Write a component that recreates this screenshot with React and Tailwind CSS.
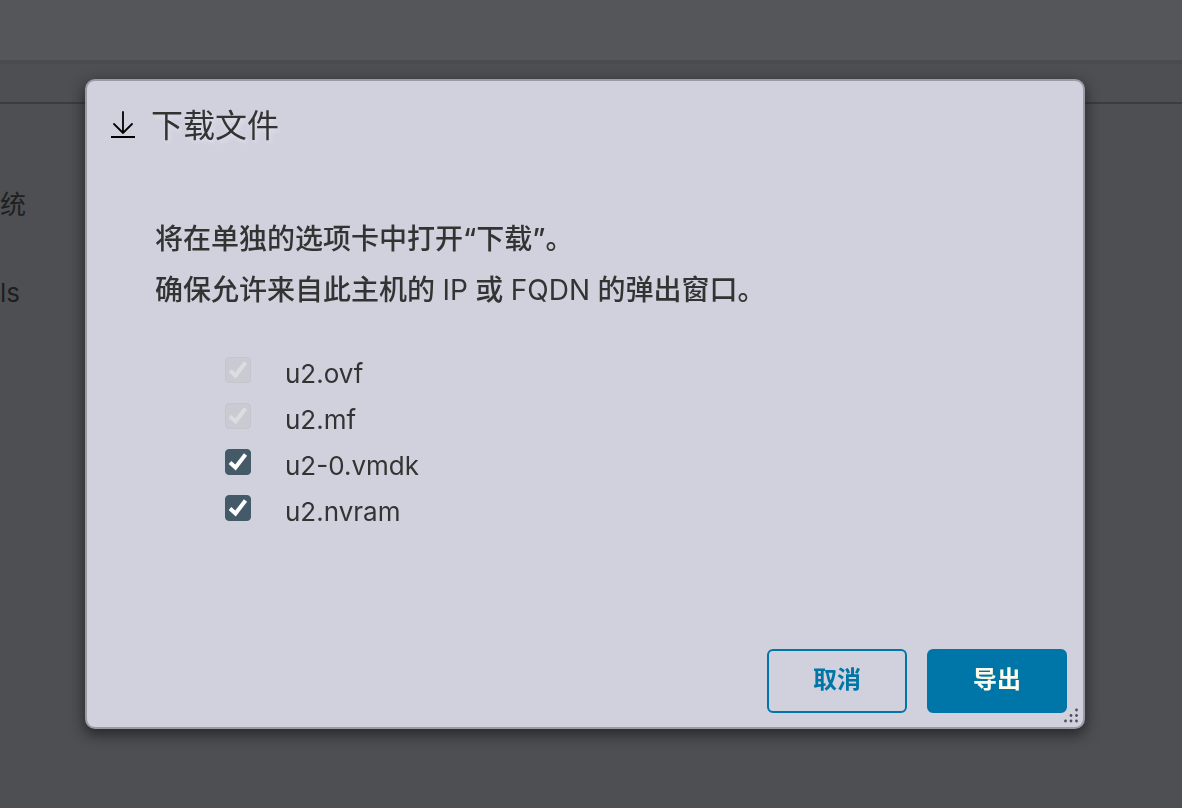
import React, { useState } from "react";

const FILES = [
  { name: "u2.ovf", required: true },
  { name: "u2.mf", required: true },
  { name: "u2-0.vmdk", required: false },
  { name: "u2.nvram", required: false },
];

function DownloadIcon() {
  return (
    <svg className="w-6 h-7" viewBox="0 0 24 28" fill="none" stroke="#000" strokeWidth="2" aria-hidden="true">
      <path d="M12 1v21M3 13l9 9 9-9" strokeWidth="1.800" strokeLinecap="round" />
      <path d="M0 26h24" />
    </svg>
  );
}

function ResizeGrip() {
  return (
    <svg className="absolute right-1 bottom-1 w-4 h-4" viewBox="0 0 16 16" fill="#4f4f5c" aria-hidden="true">
      <circle cx="13.500" cy="3" r="1.400" />
      <circle cx="8" cy="8.500" r="1.400" />
      <circle cx="13.500" cy="8.500" r="1.400" />
      <circle cx="2.500" cy="14" r="1.400" />
      <circle cx="8" cy="14" r="1.400" />
      <circle cx="13.500" cy="14" r="1.400" />
    </svg>
  );
}

function FileRow({ file, checked, onChange }) {
  return (
    <li className="flex items-start gap-[34px] h-[46px]">
      <span className="relative w-[26px] h-[26px]">
        <input
          id={file.name}
          type="checkbox"
          checked={checked}
          disabled={file.required}
          onChange={onChange}
          className="block appearance-none w-[26px] h-[26px] rounded checked:bg-[#455a69] border border-[#455a69] disabled:bg-[#cacad2] disabled:border-[#c5c5ce]"
        />
        {checked && (
          <svg
            className={"absolute inset-0 w-[26px] h-[26px] pointer-events-none " + (file.required ? "text-[#dcdce3]" : "text-white")}
            viewBox="0 0 26 26"
            fill="none"
            stroke="currentColor"
            strokeWidth="4"
            aria-hidden="true"
          >
            <path d="M5 13.500l5.500 5L20.500 5.500" />
          </svg>
        )}
      </span>
      <label htmlFor={file.name} className="text-[26px] leading-[34px]">
        {file.name}
      </label>
    </li>
  );
}

export default function App() {
  const [selected, setSelected] = useState(FILES.map(f => f.name));

  const toggle = (name) => {
    setSelected(selected.includes(name) ? selected.filter(n => n !== name) : [...selected, name]);
  };

  return (
    <div className="min-h-screen flex flex-col bg-[#4e4f53] text-[#1d1f20] font-[Inter,'Noto_Sans_CJK_SC',sans-serif]">
      <header className="h-16 bg-[#55565a] border-b-4 border-[#4a4b4f]" />
      <div className="h-10 border-b-2 border-[#3b3c40]" />
      <main className="flex flex-col gap-12 pt-[81px] text-[26px] leading-[40px]">
        <p>统</p>
        <p>ls</p>
      </main>

      <div className="fixed inset-0 flex items-start pt-[79px] pl-[85px] pr-[97px]">
        <div
          role="dialog"
          aria-labelledby="dialog-title"
          className="relative flex-1 flex flex-col rounded-[10px] border-2 border-[#9b9ba6] bg-[#d0d1dd] text-[#333333] shadow-[0_5px_14px_1px_rgba(20,24,27,0.7)]"
        >
          <div className="flex items-center gap-4 px-6 pt-[19px]">
            <DownloadIcon />
            <h1 id="dialog-title" className="pt-0.5 text-[32px] leading-[48px] [text-shadow:2px_3px_4px_rgba(235,230,245,0.7)]">
              下载文件
            </h1>
          </div>

          <div className="px-[68px] pt-16">
            <div className="text-[28px] leading-[51px] font-medium">
              <p>将在单独的选项卡中打开“下载”。</p>
              <p>
                确保允许来自此主机的 <span className="font-normal">IP</span> 或 <span className="font-normal">FQDN</span> 的弹出窗口。
              </p>
            </div>
            <ul className="pl-[70px] pt-[41px]">
              {FILES.map(f => (
                <FileRow
                  key={f.name}
                  file={f}
                  checked={selected.includes(f.name)}
                  onChange={() => toggle(f.name)}
                />
              ))}
            </ul>
          </div>

          <div className="flex justify-end gap-5 px-4 pt-[108px] pb-[14px] text-2xl font-bold">
            <button className="w-[140px] h-16 pb-0.5 rounded-md border-2 border-[#0075a8] text-[#0075a8]">
              取消
            </button>
            <button className="w-[140px] h-16 pb-0.5 rounded-md border-2 border-[#0075a8] bg-[#0075a8] text-[#fdfbea]">
              导出
            </button>
          </div>
          <ResizeGrip />
        </div>
      </div>
    </div>
  );
}
